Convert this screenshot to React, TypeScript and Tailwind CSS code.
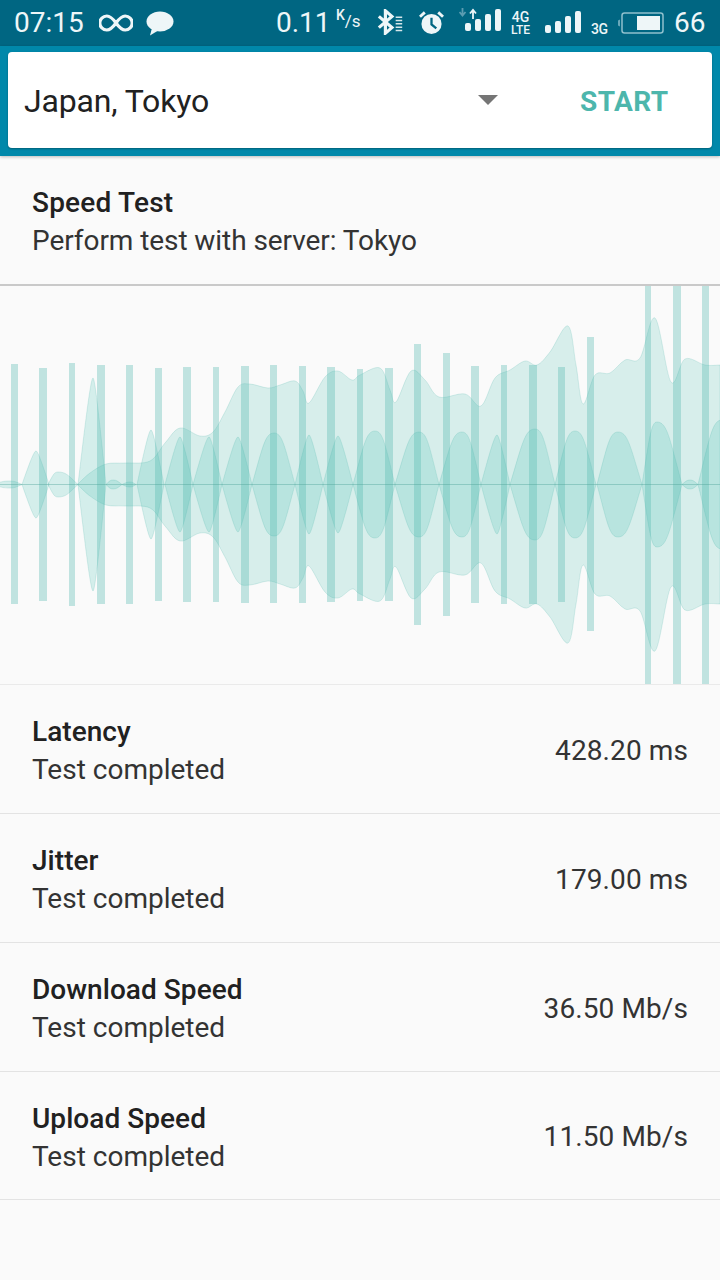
import React from "react";

const CENTER = 198.5;

// [x, top y in page coords] for the outer envelope, mirrored round the centre line
const OUTER: [number, number][] = [
  [78, 484], [90, 473], [106, 464], [125, 463], [150, 461], [165, 443], [180, 428], [200, 436], [213, 432],
  [225, 412], [238, 387], [250, 384], [268, 388], [280, 385], [295, 381], [303, 391], [309, 403],
  [325, 377], [338, 371], [352, 380], [360, 375], [380, 368], [390, 390], [396, 402], [411, 371],
  [425, 380], [439, 397], [465, 394], [481, 406], [495, 378], [510, 370], [525, 361], [537, 365],
  [550, 352], [568, 326], [576, 365], [583, 404], [595, 375], [610, 373], [625, 360], [640, 358],
  [655, 318], [671, 382], [685, 359], [705, 365], [720, 365],
];

// [start, end, peak x, peak y, flat]
const LOBES: [number, number, number, number, boolean][] = [
  [-8, 22, 10, 481, true], [22, 49, 36, 451, false], [48, 78, 58, 472, true],
  [78, 106, 93, 378, false], [106, 122, 113, 480, true], [122, 136, 130, 482, true],
  [137, 164, 151, 430, false], [165, 193, 180, 437, false], [193, 222, 209, 437, false],
  [222, 252, 238, 437, false], [252, 295, 274, 433, true], [295, 323, 309, 435, false],
  [323, 353, 338, 436, false], [353, 395, 375, 431, true], [395, 439, 419, 432, true],
  [439, 481, 462, 432, true], [481, 510, 497, 435, false], [510, 555, 535, 429, true],
  [555, 596, 575, 431, true], [597, 642, 618, 432, true], [642, 682, 657, 422, true],
  [682, 698, 690, 480, true], [698, 745, 722, 420, true],
];

// [left, width, top, bottom]
const BARS: [number, number, number, number][] = [
  [11, 7, 364, 604], [39, 8, 368, 601], [69, 6, 363, 606], [97, 8, 365, 604], [126, 7, 365, 604],
  [155, 7, 368, 601], [183, 8, 367, 602], [213, 6, 367, 602], [241, 8, 366, 603], [270, 7, 365, 603],
  [299, 7, 366, 603], [327, 8, 367, 602], [357, 6, 369, 601], [385, 8, 368, 601], [414, 7, 344, 625],
  [443, 7, 353, 616], [471, 8, 366, 603], [501, 6, 365, 604], [529, 8, 365, 604], [558, 7, 367, 602],
  [587, 7, 337, 631], [645, 6, 286, 684], [673, 8, 286, 684], [702, 7, 286, 684],
];

const toChart = (y: number) => y - 286;

function smooth(points: [number, number][]) {
  let d = "";
  for (let i = 0; i < points.length - 1; i++) {
    const p0 = points[Math.max(i - 1, 0)];
    const p1 = points[i];
    const p2 = points[i + 1];
    const p3 = points[Math.min(i + 2, points.length - 1)];
    const c1x = p1[0] + (p2[0] - p0[0]) / 6;
    const c1y = p1[1] + (p2[1] - p0[1]) / 6;
    const c2x = p2[0] - (p3[0] - p1[0]) / 6;
    const c2y = p2[1] - (p3[1] - p1[1]) / 6;
    d += `C${c1x} ${c1y} ${c2x} ${c2y} ${p2[0]} ${p2[1]}`;
  }
  return d;
}

function envelopePath() {
  const top = OUTER.map(([x, y]): [number, number] => [x, toChart(y)]);
  const bottom = [...top].reverse().map(([x, y]): [number, number] => [x, 2 * CENTER - y]);
  return `M${top[0][0]} ${top[0][1]}${smooth(top)}L${bottom[0][0]} ${bottom[0][1]}${smooth(bottom)}Z`;
}

function lobePath([a, b, px, py, flat]: [number, number, number, number, boolean]) {
  const h = CENTER - toChart(py);
  const l = px - a;
  const r = b - px;
  // rise is how far up the first handle sits, reach how far along the second
  const rise = flat ? 0.75 : 0.6;
  const reach = flat ? 0.6 : 0.85;
  const side = (sign: number) => {
    const y = CENTER - sign * h;
    const near = CENTER - sign * h * rise;
    return sign > 0
      ? `C${a + l * 0.5} ${near} ${a + l * reach} ${y} ${px} ${y}C${b - r * reach} ${y} ${b - r * 0.5} ${near} ${b} ${CENTER}`
      : `C${b - r * 0.5} ${near} ${b - r * reach} ${y} ${px} ${y}C${a + l * reach} ${y} ${a + l * 0.5} ${near} ${a} ${CENTER}`;
  };
  return `M${a} ${CENTER}${side(1)}${side(-1)}Z`;
}

const SignalBars = ({ heights }: { heights: number[] }) => (
  <div className="flex items-end gap-[4px] h-[22px] -mt-[2px]">
    {heights.map((h, i) => (
      <div key={i} className="w-[6px] rounded-[2px] bg-[#eef6f8]" style={{ height: h }} />
    ))}
  </div>
);

const Row = ({ title, value }: { title: string; value: string }) => (
  <div className="h-[129px] last:h-[128px] flex items-center justify-between pl-[32px] pr-[32px] pt-[4px] border-b border-[#e3e3e3]">
    <div>
      <div className="text-[28px] leading-[38px] font-medium text-[#212121] tracking-[0.05px]">{title}</div>
      <div className="text-[28px] leading-[38px] text-[#333333]">Test completed</div>
    </div>
    <div className="text-[28px] text-[#333333] tracking-[0.1px] -mt-[1px]">{value}</div>
  </div>
);

export default function App() {
  return (
    <div className="w-[720px] h-[1280px] overflow-hidden bg-[#fafafa] font-['Roboto',sans-serif]">
      {/* Status bar */}
      <div className="h-[46px] bg-[#006682] flex items-center text-[#eef6f8] whitespace-nowrap">
        <span className="ml-[14px] w-[71px] text-[28px] leading-none">07:15</span>
        <svg className="ml-[14px]" width="34" height="18" viewBox="0 0 34 18" fill="none" stroke="#eef6f8" strokeWidth="3.2">
          <path d="M17 9C13 3.500 10.500 2 7.800 2a7 7 0 0 0 0 14C10.500 16 13 14.500 17 9C21 3.500 23.500 2 26.200 2a7 7 0 0 1 0 14C23.500 16 21 14.500 17 9Z" />
        </svg>
        <svg className="ml-[13px]" width="28" height="25" viewBox="0 0 28 25" fill="#eef6f8">
          <ellipse cx="14" cy="10.500" rx="13.500" ry="10" />
          <path d="M6 17L4 24.500L13 19Z" />
        </svg>
        <span className="ml-[102px] w-[52px] text-[28px] leading-none">0.11</span>
        <span className="ml-[8px] w-[25px] text-[17px] leading-none -mt-[4px]">
          <sup className="text-[14px] font-medium">K</sup>/s
        </span>
        <svg className="ml-[16px] -mt-[2px]" width="28" height="26" viewBox="0 0 30 26" fill="none">
          <path d="M2 7L16 19L9 25V1L16 7L2 19" stroke="#eef6f8" strokeWidth="3.400" />
          <path d="M20 8h7M20 11.500h7M20 15h7M20 18.500h7M20 22h7" stroke="#d5e6ea" strokeWidth="1.600" />
        </svg>
        <svg className="ml-[14px] -mt-[1px]" width="25" height="24" viewBox="0 0 26 25" fill="none">
          <circle cx="13" cy="13.500" r="10.500" fill="#eef6f8" />
          <path d="M13 7v7l5 4" stroke="#006682" strokeWidth="2.400" />
          <path d="M1 6L6 1.500M25 6L20 1.500" stroke="#eef6f8" strokeWidth="3" />
        </svg>
        <div className="ml-[15px] relative w-[42px] h-[24px] flex justify-end">
          <SignalBars heights={[8, 12, 17, 22]} />
          <svg className="absolute left-0 -top-[3px]" width="22" height="12" viewBox="0 0 22 12" fill="none">
            <path d="M3.500 0v6M0.500 4l3 3.500L6.500 4" stroke="#5c9db2" strokeWidth="1.800" />
            <path d="M14 11V3M11 5.500l3-3.500 3 3.500" stroke="#eef6f8" strokeWidth="1.800" />
          </svg>
        </div>
        <div className="ml-[10px] w-[19px] flex flex-col items-center text-[12px] font-medium leading-[12px]">
          <span className="text-[14px] leading-[13px]">4G</span>
          <span>LTE</span>
        </div>
        <div className="ml-[15px]">
          <SignalBars heights={[8, 12, 17, 22]} />
        </div>
        <span className="ml-[10px] w-[17px] text-[14px] font-medium tracking-[-0.5px] leading-none mt-[11px]">3G</span>
        <svg className="ml-[8px]" width="48" height="24" viewBox="0 0 48 24" fill="none">
          <path d="M2 9.500l2-1v7l-2-1Z" fill="#6aa8ba" />
          <rect x="6" y="2" width="41" height="20" rx="2.500" stroke="#8fc0cd" strokeWidth="1.500" />
          <rect x="21" y="5" width="23" height="14" fill="#eef6f8" />
        </svg>
        <span className="ml-[10px] text-[28px] leading-none">66</span>
      </div>

      {/* Server picker */}
      <div className="h-[110px] bg-[#0088aa] px-[8px] pt-[6px] pb-[8px] shadow-[0_1px_3px_rgba(0,0,0,0.25)]">
        <div className="h-[96px] bg-white rounded-[4px] flex items-center pl-[16px] shadow-[0_1px_2px_rgba(0,0,0,0.3)]">
          <span className="text-[32px] text-[#212121] w-[454px] pt-[2px] tracking-[-0.15px]">Japan, Tokyo</span>
          <div className="w-0 h-0 border-x-[10px] border-x-transparent border-t-[10px] border-t-[#757575]" />
          <span className="ml-[82px] pt-[3px] text-[28px] font-bold text-[#4db6ac] tracking-[0.4px]">START</span>
        </div>
      </div>

      {/* Heading */}
      <div className="h-[130px] pl-[32px] flex flex-col justify-center border-b-2 border-[#c9c9c9] pt-[4px]">
        <div className="text-[28px] leading-[38px] font-medium text-[#212121] tracking-[0.2px]">Speed Test</div>
        <div className="text-[28px] leading-[38px] text-[#333333] tracking-[-0.07px]">Perform test with server: Tokyo</div>
      </div>

      {/* Chart */}
      <svg width="720" height="398" viewBox="0 0 720 398" className="block">
        <path d={envelopePath()} fill="#4dbcb0" fillOpacity="0.2" stroke="#4db6ac" strokeOpacity="0.2" />
        {LOBES.map((l, i) => (
          <path key={i} d={lobePath(l)} fill="#3dbfb0" fillOpacity="0.2" stroke="#4db6ac" strokeOpacity="0.2" />
        ))}
        {BARS.map(([x, w, top, bottom], i) => (
          <rect key={i} x={x} y={toChart(top)} width={w} height={bottom - top} fill="#4db6ac" fillOpacity="0.33" />
        ))}
        <line x1="0" x2="720" y1={CENTER} y2={CENTER} stroke="#4a9f97" strokeOpacity="0.4" />
      </svg>

      {/* Results */}
      <div className="border-t border-[#eaeaea]">
        <Row title="Latency" value="428.20 ms" />
        <Row title="Jitter" value="179.00 ms" />
        <Row title="Download Speed" value="36.50 Mb/s" />
        <Row title="Upload Speed" value="11.50 Mb/s" />
      </div>
    </div>
  );
}
